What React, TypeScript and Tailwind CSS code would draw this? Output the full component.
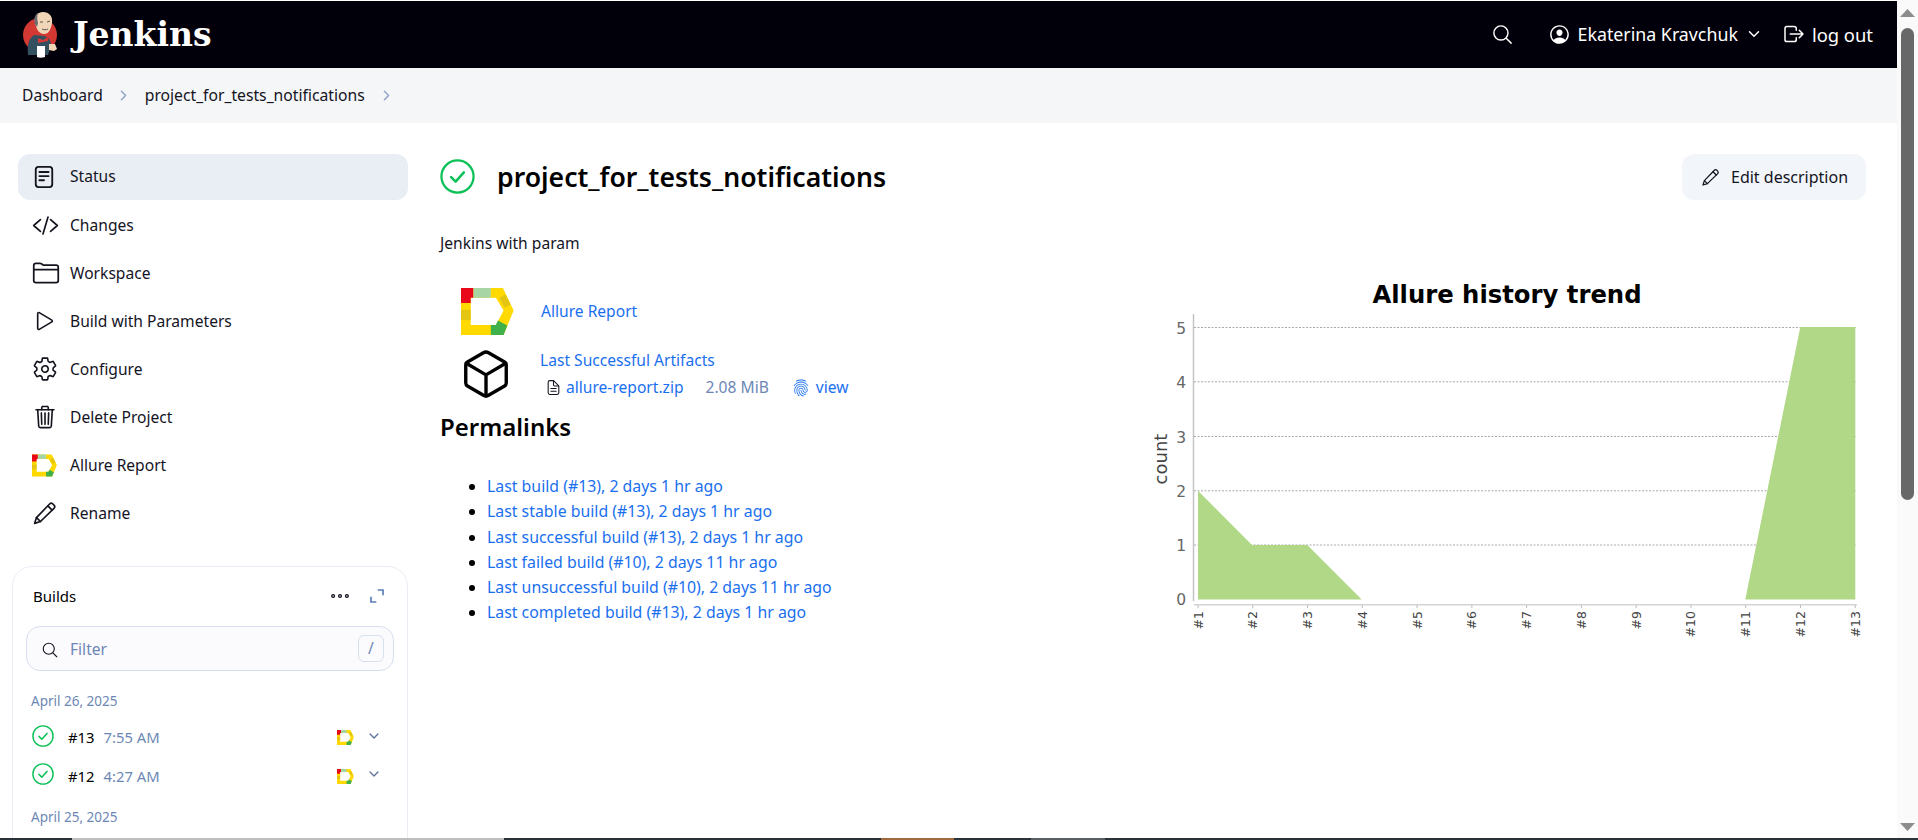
import {
  IoChevronDownOutline,
  IoChevronForwardOutline,
  IoCodeSlashOutline,
  IoCubeOutline,
  IoDocumentTextOutline,
  IoEllipsisHorizontalOutline,
  IoFingerPrintOutline,
  IoFolderOutline,
  IoLogOutOutline,
  IoPersonCircleOutline,
  IoPlayOutline,
  IoSearchOutline,
  IoSettingsOutline,
  IoTrashOutline,
} from "react-icons/io5";
import type { ReactNode } from "react";

const sideItems: { label: string; icon: ReactNode; active?: boolean }[] = [
  { label: "Status", icon: <StatusIcon />, active: true },
  { label: "Changes", icon: <IoCodeSlashOutline className="size-[27px]" /> },
  { label: "Workspace", icon: <IoFolderOutline className="size-[28px]" /> },
  { label: "Build with Parameters", icon: <IoPlayOutline className="size-[26px]" /> },
  { label: "Configure", icon: <IoSettingsOutline className="size-[26px]" /> },
  { label: "Delete Project", icon: <IoTrashOutline className="size-[26px]" /> },
  { label: "Allure Report", icon: <AllureIcon className="h-[23px] w-[25px]" /> },
  { label: "Rename", icon: <PencilIcon className="size-[25px]" /> },
];

const permalinks = [
  "Last build (#13), 2 days 1 hr ago",
  "Last stable build (#13), 2 days 1 hr ago",
  "Last successful build (#13), 2 days 1 hr ago",
  "Last failed build (#10), 2 days 11 hr ago",
  "Last unsuccessful build (#10), 2 days 11 hr ago",
  "Last completed build (#13), 2 days 1 hr ago",
];

const chartTicks = ["#1", "#2", "#3", "#4", "#5", "#6", "#7", "#8", "#9", "#10", "#11", "#12", "#13"];
const chartRows = [
  { label: "5", y: 328.5 },
  { label: "4", y: 382.8 },
  { label: "3", y: 437.5 },
  { label: "2", y: 491.8 },
  { label: "1", y: 546 },
  { label: "0", y: 600 },
];

export default function App() {
  return (
    <div className="flex h-[840px] w-full flex-col overflow-hidden bg-white font-['Noto_Sans',sans-serif] text-[15.6px] text-[#14141f]">
      <div className="flex min-h-0 flex-1">
        <div className="flex min-w-0 flex-1 flex-col">
          <Header />
          <div className="flex h-[55px] shrink-0 items-center bg-[#f5f6f8] pl-[22px]">
            <span>Dashboard</span>
            <IoChevronForwardOutline className="ml-[13px] size-[15px] text-[#8ea1c4]" />
            <span className="ml-[14px] text-[15.7px]">project_for_tests_notifications</span>
            <IoChevronForwardOutline className="ml-[14px] size-[15px] text-[#8ea1c4]" />
          </div>
          <div className="flex min-h-0 flex-1 pl-[12px] pt-[31px]">
            <Sidebar />
            <Main />
          </div>
        </div>
        <Scrollbar />
      </div>
      <div className="flex h-[2px] shrink-0 bg-[#2a3138]">
        <div className="ml-[72px] w-[432px] bg-[#bdbdbd]" />
        <div className="ml-[377px] w-[73px] bg-[#a06a3a]" />
        <div className="ml-[77px] w-[74px] bg-[#5b5f63]" />
      </div>
    </div>
  );
}

function Header() {
  return (
    <header className="mt-px flex h-[67px] shrink-0 items-center justify-between bg-[#01000a] pl-[22px] pr-[24px] text-white">
      <div className="flex items-center">
        <ButlerLogo />
        <span className="ml-[13px] font-['DejaVu_Serif',serif] text-[33px] font-bold leading-none tracking-[0px]">
          Jenkins
        </span>
      </div>
      <div className="flex items-center text-[17.8px]">
        <IoSearchOutline className="size-[23px]" />
        <IoPersonCircleOutline className="ml-[34px] size-[23px]" />
        <span className="ml-[7px]">Ekaterina Kravchuk</span>
        <IoChevronDownOutline className="ml-[8px] size-[16px]" />
        <IoLogOutOutline className="ml-[20px] size-[24px]" />
        <span className="ml-[6px] text-[18.4px]">log out</span>
      </div>
    </header>
  );
}

function Sidebar() {
  return (
    <aside className="w-[396px] shrink-0">
      <nav className="pl-[6px]">
        {sideItems.map((item) => (
          <div
            key={item.label}
            className={`mb-[2px] flex h-[46px] items-center rounded-[12px] pl-[14px] ${
              item.active ? "bg-[#e9edf4]" : ""
            }`}
          >
            <span className="grid w-[24px] place-items-center">{item.icon}</span>
            <span className={`ml-[14px] ${item.active ? "" : "pt-[2px]"}`}>{item.label}</span>
          </div>
        ))}
      </nav>
      <section className="mt-[30px] h-[300px] rounded-[20px] border border-[#e9edf4] px-[13px] pt-[17px]">
        <div className="flex h-[24px] items-center justify-between pl-[7px] pr-[10px]">
          <span className="text-[15px] text-black">Builds</span>
          <div className="flex items-center">
            <IoEllipsisHorizontalOutline className="size-[22px]" />
            <ExpandIcon />
          </div>
        </div>
        <div className="mt-[18px] flex h-[45px] items-center rounded-[14px] border border-[#d8dfee] bg-[#fbfbfe] pl-[14px] pr-[9px]">
          <IoSearchOutline className="mt-[2px] size-[18px]" />
          <span className="ml-[11px] mt-[2px] text-[#6d87b5]">Filter</span>
          <span className="ml-auto grid h-[27px] w-[26px] place-items-center rounded-[6px] border border-[#d8dfee] text-[#6d87b5]">
            /
          </span>
        </div>
        <p className="mt-[20px] pl-[5px] text-[13.5px] leading-[20px] text-[#6d87b5]">April 26, 2025</p>
        <BuildRow number="#13" time="7:55 AM" />
        <BuildRow number="#12" time="4:27 AM" />
        <p className="mt-[19px] pl-[5px] text-[13.5px] leading-[20px] text-[#6d87b5]">April 25, 2025</p>
      </section>
    </aside>
  );
}

function BuildRow({ number, time }: { number: string; time: string }) {
  return (
    <div className="mt-[14.5px] flex h-[24px] items-center pl-[6px] pr-[13px]">
      <CheckCircle className="mb-[4px] size-[22px]" />
      <span className="ml-[14px] text-[14.8px] text-black">{number}</span>
      <span className="ml-[9px] text-[14.8px] text-[#6d87b5]">{time}</span>
      <AllureIcon className="ml-auto h-[15px] w-[17px]" />
      <IoChevronDownOutline className="mb-[4px] ml-[13px] size-[14px] text-[#5c7199]" />
    </div>
  );
}

function Main() {
  return (
    <main className="min-w-0 flex-1 pl-[32px] pr-[31px]">
      <div className="flex h-[46px] items-center justify-between">
        <div className="flex items-center">
          <CheckCircle className="size-[35px]" />
          <h1 className="ml-[22px] pt-[1px] text-[26.6px] font-semibold text-black">project_for_tests_notifications</h1>
        </div>
        <button
          type="button"
          className="flex h-[46px] w-[184px] items-center rounded-[12px] bg-[#f2f5f9] pl-[19px] text-[16px]"
        >
          <PencilIcon className="size-[19px]" />
          <span className="ml-[11px]">Edit description</span>
        </button>
      </div>
      <p className="mt-[33px] leading-[20px]">Jenkins with param</p>

      <div className="flex">
        <div className="w-[700px] shrink-0">
          <div className="mt-[35px] flex h-[47px] items-center pl-[21px]">
            <AllureIcon className="h-[47px] w-[53px]" />
            <a className="ml-[27px] text-[#1a6fef]">Allure Report</a>
          </div>
          <div className="mt-[12px] flex pl-[22px]">
            <IoCubeOutline className="-ml-[3px] size-[54px] shrink-0 text-black" />
            <div className="ml-[27px] pt-[2px]">
              <a className="block leading-[22px] text-[#1a6fef]">Last Successful Artifacts</a>
              <div className="mt-[5px] flex items-center">
                <IoDocumentTextOutline className="ml-[5px] size-[17px]" />
                <a className="ml-[4px] text-[#1a6fef]">allure-report.zip</a>
                <span className="ml-[22px] text-[#6d87b5]">2.08 MiB</span>
                <IoFingerPrintOutline className="ml-[23px] size-[18px] text-[#1a6fef]" />
                <a className="ml-[6px] text-[#1a6fef]">view</a>
              </div>
            </div>
          </div>
          <h2 className="mt-[11px] text-[24px] font-semibold leading-[30px] text-black">Permalinks</h2>
          <ul className="mt-[32px] list-disc pl-[47px] text-[15.85px] marker:text-black">
            {permalinks.map((link) => (
              <li key={link} className="h-[25.3px] leading-[25px] text-[#1a6fef]">
                {link}
              </li>
            ))}
          </ul>
        </div>
        <TrendChart />
      </div>
    </main>
  );
}

// plot coordinates are page pixels, offset by the svg's viewBox
function TrendChart() {
  const tickX = chartTicks.map((_, i) => 1198 + i * 54.77);
  return (
    <svg viewBox="1140 254 726 410" className="h-[410px] w-[726px] shrink-0" fontFamily="'DejaVu Sans', sans-serif">
      <text x="1507" y="304" textAnchor="middle" fontSize="24.3" fontWeight="700" fill="#000">
        Allure history trend
      </text>
      {chartRows.slice(0, 5).map((row) => (
        <line key={row.label} x1="1194" x2="1856" y1={row.y} y2={row.y} stroke="#a9a9a9" strokeDasharray="2 1.5" />
      ))}
      <polygon points="1198,491.8 1252,546 1307.3,546 1361.7,600.5 1198,600.5" fill="#aed682" fillOpacity="0.96" />
      <polygon points="1745.3,600.5 1800.3,328 1855.3,328 1855.3,600.5" fill="#aed682" fillOpacity="0.96" />
      <line x1="1193.5" x2="1193.5" y1="315" y2="602" stroke="#c4c4c8" strokeWidth="1.5" />
      <line x1="1194" x2="1857" y1="605.7" y2="605.7" stroke="#d4d4d4" strokeWidth="1.5" />
      {chartRows.map((row) => (
        <text key={row.label} x="1186" y={row.y + 6} textAnchor="end" fontSize="15.5" fill="#666">
          {row.label}
        </text>
      ))}
      <text transform="translate(1167 460) rotate(-90)" textAnchor="middle" fontSize="18" fill="#444">
        count
      </text>
      {chartTicks.map((tick, i) => (
        <g key={tick}>
          <line x1={tickX[i]} x2={tickX[i]} y1="606" y2="609" stroke="#bbb" />
          <text transform={`translate(${tickX[i] + 4.5} 612) rotate(-90)`} textAnchor="end" fontSize="12.5" fill="#444">
            {tick}
          </text>
        </g>
      ))}
    </svg>
  );
}

function Scrollbar() {
  return (
    <div className="flex w-[21px] shrink-0 flex-col items-center bg-[#fafafa] pt-[9px]">
      <svg viewBox="0 0 15 8" className="h-[8px] w-[15px]">
        <polygon points="0,8 7.5,0 15,8" fill="#8c8c8c" />
      </svg>
      <div className="mt-[11px] h-[472px] w-[13px] rounded-full bg-[#686868]" />
      <svg viewBox="0 0 15 8" className="mb-[7px] mt-auto h-[8px] w-[15px]">
        <polygon points="0,0 15,0 7.5,8" fill="#8c8c8c" />
      </svg>
    </div>
  );
}

function StatusIcon() {
  return (
    <svg viewBox="0 0 24 26" className="h-[24px] w-[22px]" fill="none" stroke="currentColor" strokeWidth="2" strokeLinecap="round">
      <rect x="3" y="2" width="18" height="22" rx="3" />
      <path d="M7 7.5h10M7 12h10M7 16.5h5" />
    </svg>
  );
}

function PencilIcon({ className }: { className: string }) {
  return (
    <svg viewBox="0 0 24 24" className={`shrink-0 ${className}`} fill="none" stroke="currentColor" strokeWidth="1.6" strokeLinecap="round" strokeLinejoin="round">
      <path d="M2.5 21.5l1.8-5.6L16.9 2.9a2.2 2.2 0 0 1 3.1 0l1.1 1.1a2.2 2.2 0 0 1 0 3.1L8.1 19.7Z" />
      <path d="M4.3 15.9l3.8 3.8M15.2 4.7l4.1 4.1" />
    </svg>
  );
}

function CheckCircle({ className }: { className: string }) {
  return (
    <svg viewBox="0 0 34 34" className={`shrink-0 ${className}`} fill="none" stroke="#0bc157" strokeWidth="2.2" strokeLinecap="round" strokeLinejoin="round">
      <circle cx="17" cy="17" r="15.6" />
      <path d="M10.8 17.6l4.4 4.4 8-9" strokeWidth="2.4" />
    </svg>
  );
}

function ExpandIcon() {
  return (
    <svg viewBox="0 0 14 14" className="ml-[19px] size-[14px]" fill="none" stroke="#5c7fb8" strokeWidth="1.7" strokeLinecap="square">
      <path d="M8.5 1H13V5.5M1 8.5V13H5.5" />
    </svg>
  );
}

// traced from the crop of the logo, coordinates are the 3x crop
function AllureIcon({ className }: { className: string }) {
  return (
    <svg viewBox="33 23 158 140" className={`shrink-0 ${className}`}>
      <path d="M33 23H158L190 90L160 163H33ZM62 52V133H137L160 90L137 52Z" fill="#ffd900" fillRule="evenodd" />
      <path d="M33 23H70V52H62V68H33Z" fill="#e9081a" />
      <path d="M70 23H122V52H70Z" fill="#a8d5a4" />
      <path d="M33 88H62V118H33Z" fill="#e3c512" />
      <path d="M147 52L165 42L181 72L163 82Z" fill="#e3c512" />
      <path d="M122 133H137L143 120L171 135L160 163H122Z" fill="#3fb04a" />
    </svg>
  );
}

function ButlerLogo() {
  return (
    <svg viewBox="22 10 38 50" className="h-[50px] w-[38px] shrink-0">
      <circle cx="40" cy="35" r="17" fill="#d33833" />
      <path d="M28 55c-1-8 0-16 6-20l10 1c6 2 7 6 7 10l-3 9H28Z" fill="#335061" />
      <path d="M35 22c-1-6 3-10 8-10 6 0 10 4 9 11-1 6-3 11-8 11-5 0-8-5-9-12Z" fill="#f0d6b7" />
      <path d="M35 24c-2-5 0-9 3-11-1 3-1 7 0 10l-1 4Z" fill="#6d6b6d" />
      <path d="M47 22l3-1M40 22l3 0M42 29c2 1 4 1 6 0" stroke="#49484a" strokeWidth="0.9" fill="none" />
      <path d="M38 38l5 2 5-3v4l-5 1-5 1Z" fill="#d33833" />
      <path d="M37 46h8v11c-3 1-6 1-8 0Z" fill="#fff" />
      <path d="M49 44h6l2 5-3 2-5-1Z" fill="#f0d6b7" />
    </svg>
  );
}
